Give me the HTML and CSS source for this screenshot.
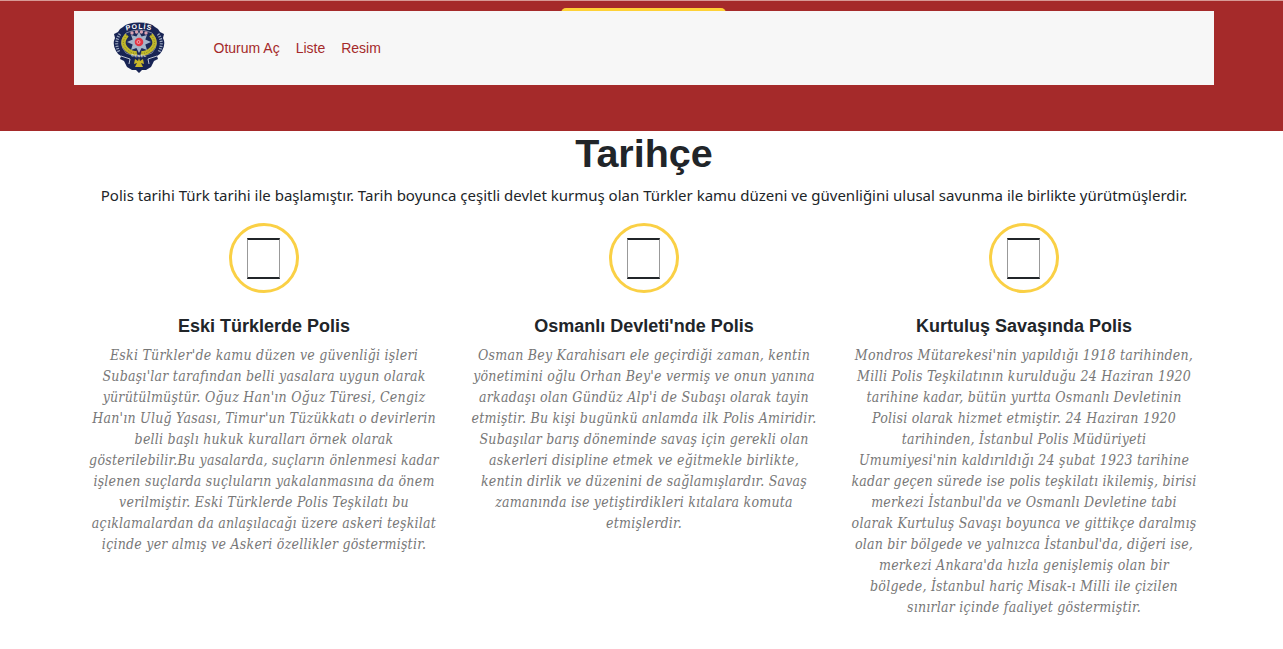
FILE: index.html
```html
<!DOCTYPE html>
<html lang="tr">
<head>
<meta charset="utf-8">
<title>Tarihçe</title>
<link rel="stylesheet" href="styles.css">
</head>
<body>
<header class="masthead">
  <span class="cta"></span>
  <nav class="navbar">
    <svg class="emblem" viewBox="0 0 52 52">
      <path d="M1 12L5 10L7 7L10 5Q14 .5 26 .5Q38 .5 42 5L45 7L47 10L51 12L50 16Q53 22 49 29Q47 33 44 34L45 37L41 39L38 45L33 48L29 48L26 51L23 48L19 48L14 45L11 39L7 37L8 34Q5 33 3 29Q-1 22 2 16Z" fill="#182454"/>
      <path d="M7 12Q1 20 6 30M45 12Q51 20 46 30" fill="none" stroke="#9aa6bd" stroke-width="3" stroke-dasharray="1.2 1.3"/>
      <path d="M13 11Q26 5 39 11Q48 21 39 31Q26 37 13 31Q4 21 13 11Z" fill="#1c2959" stroke="#d2d7df" stroke-width=".5"/>
      <path d="M14 13Q6 22 16 29Q20 32 24 31M38 13Q46 22 36 29Q32 32 28 31" fill="none" stroke="#c0b72c" stroke-width="4.4"/>
      <path d="M14 13Q6 22 16 29Q20 32 24 31M38 13Q46 22 36 29Q32 32 28 31" fill="none" stroke="#777b27" stroke-width="1" stroke-dasharray="1 1.6"/>
      <path d="M26 10L28.600 14.500L34 13L32.300 17.500L38 20L32.300 22.500L34 28L28.600 26L26 31L23.400 26L18 28L19.700 22.500L14 20L19.700 17.500L18 13L23.400 14.500Z" fill="#a6b5c9"/>
      <circle cx="26" cy="20" r="4.300" fill="#e33545"/>
      <circle cx="25.500" cy="20" r="1.500" fill="none" stroke="#fbc3c9" stroke-width=".8"/>
      <g fill="#d9a2b2"><circle cx="19" cy="11" r="1.700"/><circle cx="23.600" cy="10" r="1.700"/><circle cx="28.400" cy="10" r="1.700"/><circle cx="33" cy="11" r="1.700"/></g>
      <path d="M8 34L17 37L16 42M44 34L35 37L36 42" fill="none" stroke="#e9ecf0" stroke-width=".8"/>
      <path d="M22 37L25 39L26 36L27 39L30 37L31 42L28 41L30 45H22L24 41L21 42Z" fill="#c9b62a"/>
      <path id="arc" d="M10 9.500Q26 4 42 9.500" fill="none"/>
      <path id="base" d="M15 33.500Q26 37 37 33.500" fill="none"/>
      <text class="emblem-name"><textPath href="#arc" startOffset="50%">POLİS</textPath></text>
      <text class="emblem-sub"><textPath href="#base" startOffset="50%">GENEL</textPath></text>
    </svg>
    <div class="links"><a>Oturum Aç</a><a>Liste</a><a>Resim</a></div>
  </nav>
</header>
<main class="history">
  <h1>Tarihçe</h1>
  <p class="lead">Polis tarihi Türk tarihi ile başlamıştır. Tarih boyunca çeşitli devlet kurmuş olan Türkler kamu düzeni ve güvenliğini ulusal savunma ile birlikte yürütmüşlerdir.</p>
  <div class="columns">
    <section>
      <div class="ring"><i></i></div>
      <h2>Eski Türklerde Polis</h2>
      <p class="story">Eski Türkler'de kamu düzen ve güvenliği işleri<br>Subaşı'lar tarafından belli yasalara uygun olarak<br>yürütülmüştür. Oğuz Han'ın Oğuz Türesi, Cengiz<br>Han'ın Uluğ Yasası, Timur'un Tüzükkatı o devirlerin<br>belli başlı hukuk kuralları örnek olarak<br>gösterilebilir.Bu yasalarda, suçların önlenmesi kadar<br>işlenen suçlarda suçluların yakalanmasına da önem<br>verilmiştir. Eski Türklerde Polis Teşkilatı bu<br>açıklamalardan da anlaşılacağı üzere askeri teşkilat<br>içinde yer almış ve Askeri özellikler göstermiştir.</p>
    </section>
    <section>
      <div class="ring"><i></i></div>
      <h2>Osmanlı Devleti'nde Polis</h2>
      <p class="story">Osman Bey Karahisarı ele geçirdiği zaman, kentin<br>yönetimini oğlu Orhan Bey'e vermiş ve onun yanına<br>arkadaşı olan Gündüz Alp'i de Subaşı olarak tayin<br>etmiştir. Bu kişi bugünkü anlamda ilk Polis Amiridir.<br>Subaşılar barış döneminde savaş için gerekli olan<br>askerleri disipline etmek ve eğitmekle birlikte,<br>kentin dirlik ve düzenini de sağlamışlardır. Savaş<br>zamanında ise yetiştirdikleri kıtalara komuta<br>etmişlerdir.</p>
    </section>
    <section>
      <div class="ring"><i></i></div>
      <h2>Kurtuluş Savaşında Polis</h2>
      <p class="story">Mondros Mütarekesi'nin yapıldığı 1918 tarihinden,<br>Milli Polis Teşkilatının kurulduğu 24 Haziran 1920<br>tarihine kadar, bütün yurtta Osmanlı Devletinin<br>Polisi olarak hizmet etmiştir. 24 Haziran 1920<br>tarihinden, İstanbul Polis Müdüriyeti<br>Umumiyesi'nin kaldırıldığı 24 şubat 1923 tarihine<br>kadar geçen sürede ise polis teşkilatı ikilemiş, birisi<br>merkezi İstanbul'da ve Osmanlı Devletine tabi<br>olarak Kurtuluş Savaşı boyunca ve gittikçe daralmış<br>olan bir bölgede ve yalnızca İstanbul'da, diğeri ise,<br>merkezi Ankara'da hızla genişlemiş olan bir<br>bölgede, İstanbul hariç Misak-ı Milli ile çizilen<br>sınırlar içinde faaliyet göstermiştir.</p>
    </section>
  </div>
</main>
</body>
</html>
```
FILE: styles.css
```css
* { box-sizing: border-box; }
body { margin: 0; height: 649px; overflow: hidden; background: #fff; color: #212529; font-family: "Liberation Sans", Arial, sans-serif; }
.masthead { position: relative; height: 131px; padding: 10px 69px 0 74px; background: #a52a2a; border-top: 1px solid #d79a96; }
.cta { position: absolute; left: 561px; top: 7px; width: 165px; height: 12px; border-radius: 5px; background: #fed136; }
.navbar { position: relative; display: flex; align-items: center; width: 1140px; height: 74px; padding-left: 39px; background: #f7f7f7; }
.emblem { width: 52px; height: 52px; flex: none; margin-bottom: 1px; }
.emblem-name { font: bold 7px "Liberation Sans", sans-serif; fill: #fff; text-anchor: middle; letter-spacing: .9px; }
.emblem-sub { font: bold 3.500px "Liberation Sans", sans-serif; fill: #e4e8ef; text-anchor: middle; letter-spacing: .8px; }
.links { display: flex; gap: 16px; margin-left: 48.500px; font-size: 14px; line-height: 21px; color: #a52a2a; }
.history { width: 1140px; margin-left: 74px; text-align: center; }
h1 { margin: 0; font-size: 39.500px; line-height: 44px; }
.lead { margin: 8px 0 0; height: 24px; font: 15px/24px "Noto Sans", sans-serif; white-space: nowrap; }
.columns { display: grid; grid-template-columns: repeat(3, 380px); margin-top: 16px; }
.ring { display: flex; align-items: center; justify-content: center; width: 70px; height: 70px; margin: 0 auto; border: 3px solid #fad045; border-radius: 50%; }
.ring i { width: 33px; height: 41px; margin-right: 1px; border: solid #212529; border-width: 2px 1px; border-left-color: #999; border-right-color: #999; }
h2 { margin: 22px 0 8px; font-size: 18px; line-height: 22px; }
.story { margin: 0; color: #777; font: italic 14px/21px "DejaVu Serif Condensed", "DejaVu Serif", serif; font-stretch: condensed; letter-spacing: .24px; white-space: nowrap; }
```
